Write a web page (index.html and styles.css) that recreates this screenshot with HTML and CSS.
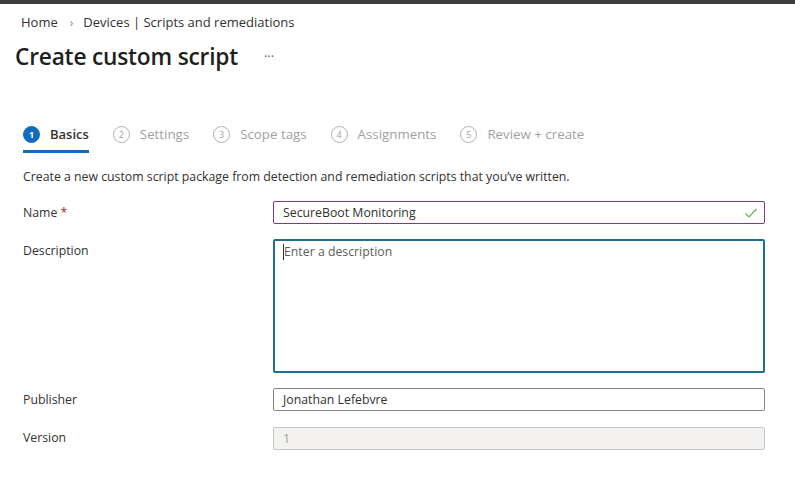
FILE: index.html
```html
<!DOCTYPE html>
<html lang="en">
<head>
    <meta charset="UTF-8">
    <title>Create custom script</title>
    <link rel="stylesheet" href="styles.css">
</head>
<body>

    <!-- Top bar -->
    <div class="topbar"></div>

    <!-- Breadcrumb -->
    <nav class="breadcrumb">
        <span>Home</span>
        <span class="sep">&#8250;</span>
        <span>Devices | Scripts and remediations</span>
    </nav>

    <!-- Title -->
    <header class="page-header">
        <h1>Create custom script</h1>
        <span class="more">&middot;&middot;&middot;</span>
    </header>

    <!-- Wizard steps -->
    <div class="steps">
        <div class="step active"><span class="num">1</span>Basics</div>
        <div class="step"><span class="num">2</span>Settings</div>
        <div class="step"><span class="num">3</span>Scope tags</div>
        <div class="step"><span class="num">4</span>Assignments</div>
        <div class="step"><span class="num">5</span>Review + create</div>
    </div>

    <p class="intro">Create a new custom script package from detection and remediation scripts that you&#8217;ve written.</p>

    <!-- Form -->
    <div class="form">
        <div class="row">
            <label>Name <span class="req">*</span></label>
            <div class="field valid">
                <span class="value">SecureBoot Monitoring</span>
                <svg class="check" width="14" height="14" viewBox="0 0 14 14"><path d="M1.5 7.5 L5 11 L12.5 3" fill="none" stroke="#6fae4a" stroke-width="1.2"/></svg>
            </div>
        </div>
        <div class="row">
            <label>Description</label>
            <div class="field textarea"><span class="caret"></span><span class="placeholder">Enter a description</span></div>
        </div>
        <div class="row">
            <label>Publisher</label>
            <div class="field"><span class="value">Jonathan Lefebvre</span></div>
        </div>
        <div class="row">
            <label>Version</label>
            <div class="field disabled"><span class="value">1</span></div>
        </div>
    </div>

</body>
</html>
```

FILE: styles.css
```css
/* General body styling */
body {
    font-family: "Open Sans", "Noto Sans", sans-serif;
    margin: 0;
    padding: 0;
    background-color: #fff;
    color: #323130;
    font-size: 12.3px;
}

.topbar {
    height: 4px;
    background-color: #3b3b3b;
}

/* Breadcrumb */
.breadcrumb {
    display: flex;
    align-items: center;
    padding: 8px 0 0 21px;
    height: 20px;
    font-size: 13px;
    color: #323130;
}

.breadcrumb .sep {
    margin: 0 10px 0 12px;
    color: #8a8886;
    font-size: 12px;
}

/* Title */
.page-header {
    display: flex;
    align-items: center;
    padding: 5px 0 0 15px;
    height: 38px;
}

h1 {
    font-size: 22.7px;
    font-weight: 600;
    margin: 0;
    color: #201f1e;
    letter-spacing: -0.2px;
}

.more {
    margin-left: 26px;
    font-size: 13px;
    color: #605e5c;
}

/* Steps */
.steps {
    display: flex;
    margin: 50px 0 0 23px;
    height: 28px;
}

.step {
    display: flex;
    align-items: flex-start;
    margin-right: 24px;
    font-size: 13.3px;
    color: #a19f9d;
    height: 28px;
    box-sizing: border-box;
}

.step .num {
    display: inline-flex;
    align-items: center;
    justify-content: center;
    width: 15px;
    height: 15px;
    border: 1px solid #b3b0ad;
    border-radius: 50%;
    font-size: 9px;
    margin: 1px 10px 0 0;
    color: #a19f9d;
}

.step.active {
    color: #323130;
    font-weight: 600;
    font-size: 13px;
    border-bottom: 3px solid #0f6cbd;
}

.step.active .num {
    background-color: #0f6cbd;
    border-color: #0f6cbd;
    color: #fff;
    font-weight: 700;
}

.intro {
    margin: 15px 0 0 23px;
}

/* Form */
.form {
    margin: 16px 30px 0 23px;
}

.row {
    display: flex;
    margin-bottom: 15px;
}

.row label {
    width: 250px;
    flex-shrink: 0;
    padding-top: 3px;
}

.req {
    color: #a4262c;
}

.field {
    flex: 1;
    height: 23px;
    border: 1px solid #8a8886;
    border-radius: 2px;
    box-sizing: border-box;
    display: flex;
    align-items: center;
    padding: 0 9px;
}

.field.valid {
    border-color: #7a3b8c;
    justify-content: space-between;
}

.check {
    margin-right: -3px;
}

.field.textarea {
    height: 134px;
    border: 2px solid #216f8f;
    align-items: flex-start;
    padding: 2px 8px;
}

.caret {
    width: 1px;
    height: 16px;
    background-color: #323130;
    margin-top: 1px;
}

.placeholder {
    color: #605e5c;
}

.field.disabled {
    background-color: #f3f2f1;
    border-color: #c8c6c4;
    color: #a19f9d;
    margin-top: 1px;
}
```
